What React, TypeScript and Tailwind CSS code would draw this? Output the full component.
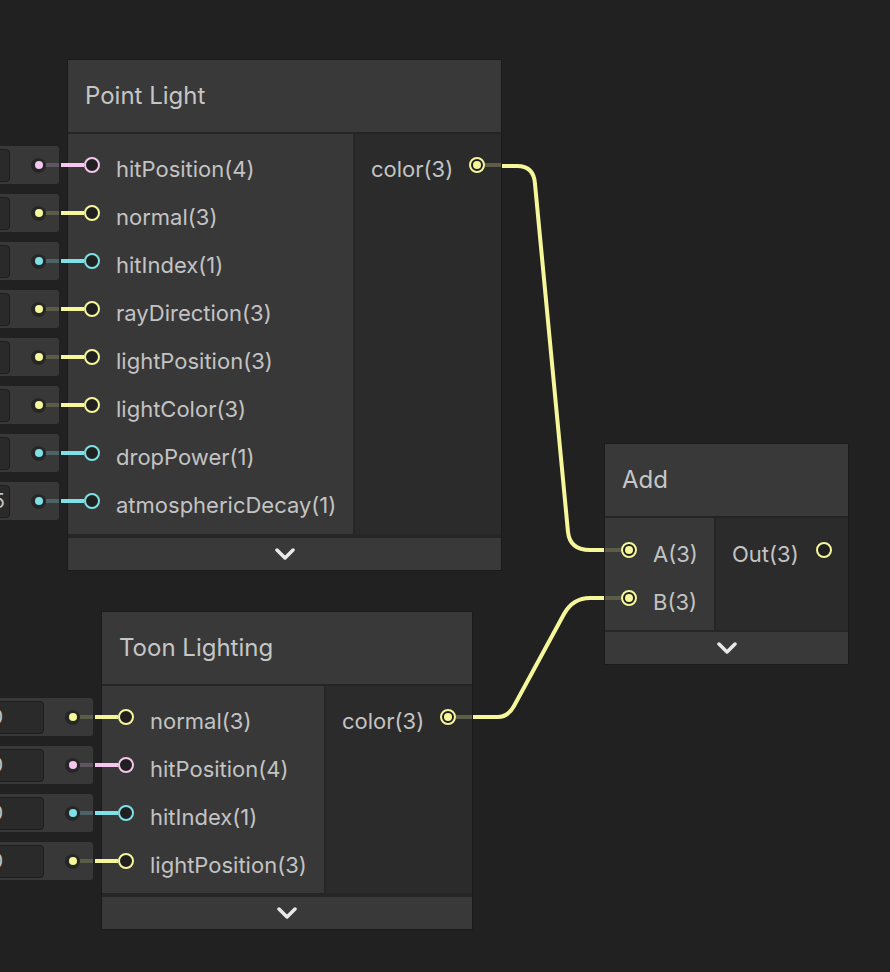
import React from "react";

type Tone = "y" | "p" | "c";

const TONES: Record<Tone, { bright: string; dim: string }> = {
  y: { bright: "#f6f79b", dim: "#5c5d47" },
  p: { bright: "#f5c6ee", dim: "#5e5560" },
  c: { bright: "#7fe1e8", dim: "#4b6365" },
};

type Input = {
  label: string;
  tone: Tone;
  linked?: boolean;
  boxed?: boolean;
  value?: string;
  valuePad?: number;
};

type Output = { label: string; tone: Tone; linked?: boolean };

const Port = ({ tone, linked }: { tone: Tone; linked?: boolean }) => (
  <div
    className="shrink-0 w-4 h-4 rounded-full border-2 bg-[#202020] flex items-center justify-center"
    style={{ borderColor: TONES[tone].bright }}
  >
    {linked && (
      <div className="w-2 h-2 rounded-full" style={{ background: TONES[tone].bright }} />
    )}
  </div>
);

const Chevron = () => (
  <svg width="20" height="12" viewBox="0 0 20 12">
    <polyline
      points="2,2 10,10 18,2"
      fill="none"
      stroke="#e9e9e9"
      strokeWidth="3.5"
      strokeLinecap="round"
      strokeLinejoin="round"
    />
  </svg>
);

// the little default-value field that hangs off the left side of a node
const ValueBox = ({ input }: { input: Input }) => {
  const t = TONES[input.tone];
  return (
    <div className="shrink-0 -ml-[159px] w-[150px] h-[38px] rounded-[3px] bg-[#383838] flex items-center justify-end">
      <div
        className="w-[80px] h-[33px] rounded-[4px] bg-[#2a2a2a] border border-[#1d1d1d] flex items-center justify-end text-[20px] text-[#c3c3c3] overflow-hidden"
        style={{ paddingRight: input.valuePad ?? 4 }}
      >
        {input.value}
      </div>
      <div className="ml-[21px] w-[15px] h-[15px] rounded-full bg-[#262626] flex items-center justify-center">
        <div className="w-[8px] h-[8px] rounded-full" style={{ background: t.bright }} />
      </div>
      <div className="w-[13px] h-[4px]" style={{ background: t.dim }} />
    </div>
  );
};

const InputRow = ({ input }: { input: Input }) => {
  const t = TONES[input.tone];
  return (
    <div className="h-12 flex items-center text-[22px] text-[#c3c3c3]">
      {input.boxed ? (
        <>
          <ValueBox input={input} />
          <div className="shrink-0 ml-[2px] w-[23px] h-[4px]" style={{ background: t.bright }} />
        </>
      ) : (
        <div
          className="shrink-0 w-4 h-[4px]"
          style={{ background: input.linked ? t.dim : "transparent" }}
        />
      )}
      <Port tone={input.tone} linked={input.linked} />
      <span className="ml-4 pt-2 whitespace-nowrap">{input.label}</span>
    </div>
  );
};

const OutputRow = ({ output }: { output: Output }) => {
  const t = TONES[output.tone];
  return (
    <div className="h-12 flex items-center pl-4 text-[22px] text-[#c3c3c3]">
      <span className="flex-1 pt-2 whitespace-nowrap">{output.label}</span>
      <Port tone={output.tone} linked={output.linked} />
      <div
        className="shrink-0 w-4 h-[4px]"
        style={{ background: output.linked ? t.dim : "transparent" }}
      />
    </div>
  );
};

type NodeProps = {
  title: string;
  pos: string;
  inputWidth: string;
  inputs: Input[];
  outputs: Output[];
  bodyPad: string;
  gap: string;
};

const GraphNode = ({ title, pos, inputWidth, inputs, outputs, bodyPad, gap }: NodeProps) => (
  <div className={`absolute ${pos} border border-[#1b1b1b] bg-[#262626] flex flex-col`}>
    <div className="h-[74px] bg-[#393939] flex items-center pl-[17px] text-[24px] text-[#c6c6c6] border-b-2 border-[#242424]">
      {title}
    </div>
    <div className="flex">
      <div className={`${inputWidth} bg-[#383838] ${bodyPad}`}>
        {inputs.map((i) => (
          <InputRow key={i.label} input={i} />
        ))}
      </div>
      <div className="w-[2px] bg-[#262626]" />
      <div className={`flex-1 bg-[#2b2b2b] ${bodyPad}`}>
        {outputs.map((o) => (
          <OutputRow key={o.label} output={o} />
        ))}
      </div>
    </div>
    <div className={`${gap} bg-[#262626]`} />
    <div className="h-8 bg-[#393939] flex items-center justify-center">
      <Chevron />
    </div>
  </div>
);

const pointLightInputs: Input[] = [
  { label: "hitPosition(4)", tone: "p", boxed: true },
  { label: "normal(3)", tone: "y", boxed: true },
  { label: "hitIndex(1)", tone: "c", boxed: true },
  { label: "rayDirection(3)", tone: "y", boxed: true },
  { label: "lightPosition(3)", tone: "y", boxed: true },
  { label: "lightColor(3)", tone: "y", boxed: true },
  { label: "dropPower(1)", tone: "c", boxed: true },
  { label: "atmosphericDecay(1)", tone: "c", boxed: true, value: "5", valuePad: 4 },
];

const toonInputs: Input[] = [
  { label: "normal(3)", tone: "y", boxed: true, value: "0", valuePad: 40 },
  { label: "hitPosition(4)", tone: "p", boxed: true, value: "0", valuePad: 40 },
  { label: "hitIndex(1)", tone: "c", boxed: true, value: "0", valuePad: 40 },
  { label: "lightPosition(3)", tone: "y", boxed: true, value: "0", valuePad: 40 },
];

export default function App() {
  return (
    <div className="relative w-[890px] h-[972px] overflow-hidden bg-[#212121] [font-family:Inter,'Noto_Sans',sans-serif]">
      <svg className="absolute inset-0" width="890" height="972" viewBox="0 0 890 972">
        <path
          d="M 496 166 H 517 Q 534 166 535 184 L 568 532 Q 570 550 590 550 H 608"
          fill="none"
          stroke="#f6f79b"
          strokeWidth="4"
          strokeLinejoin="round"
        />
        <path
          d="M 468 717 H 498 Q 508 717 514 706 L 564 614 Q 573 598 590 598 H 608"
          fill="none"
          stroke="#f6f79b"
          strokeWidth="4"
          strokeLinejoin="round"
        />
      </svg>

      <GraphNode
        title="Point Light"
        pos="left-[67px] top-[59px] w-[435px]"
        inputWidth="w-[285px]"
        inputs={pointLightInputs}
        outputs={[{ label: "color(3)", tone: "y", linked: true }]}
        bodyPad="pt-[7px] pb-[9px]"
        gap="h-[4px]"
      />

      <GraphNode
        title="Add"
        pos="left-[604px] top-[443px] w-[245px]"
        inputWidth="w-[109px]"
        inputs={[
          { label: "A(3)", tone: "y", linked: true },
          { label: "B(3)", tone: "y", linked: true },
        ]}
        outputs={[{ label: "Out(3)", tone: "y" }]}
        bodyPad="pt-[8px] pb-[8px]"
        gap="h-[2px]"
      />

      <GraphNode
        title="Toon Lighting"
        pos="left-[101px] top-[611px] w-[372px]"
        inputWidth="w-[222px]"
        inputs={toonInputs}
        outputs={[{ label: "color(3)", tone: "y", linked: true }]}
        bodyPad="pt-[7px] pb-[8px]"
        gap="h-[4px]"
      />
    </div>
  );
}
